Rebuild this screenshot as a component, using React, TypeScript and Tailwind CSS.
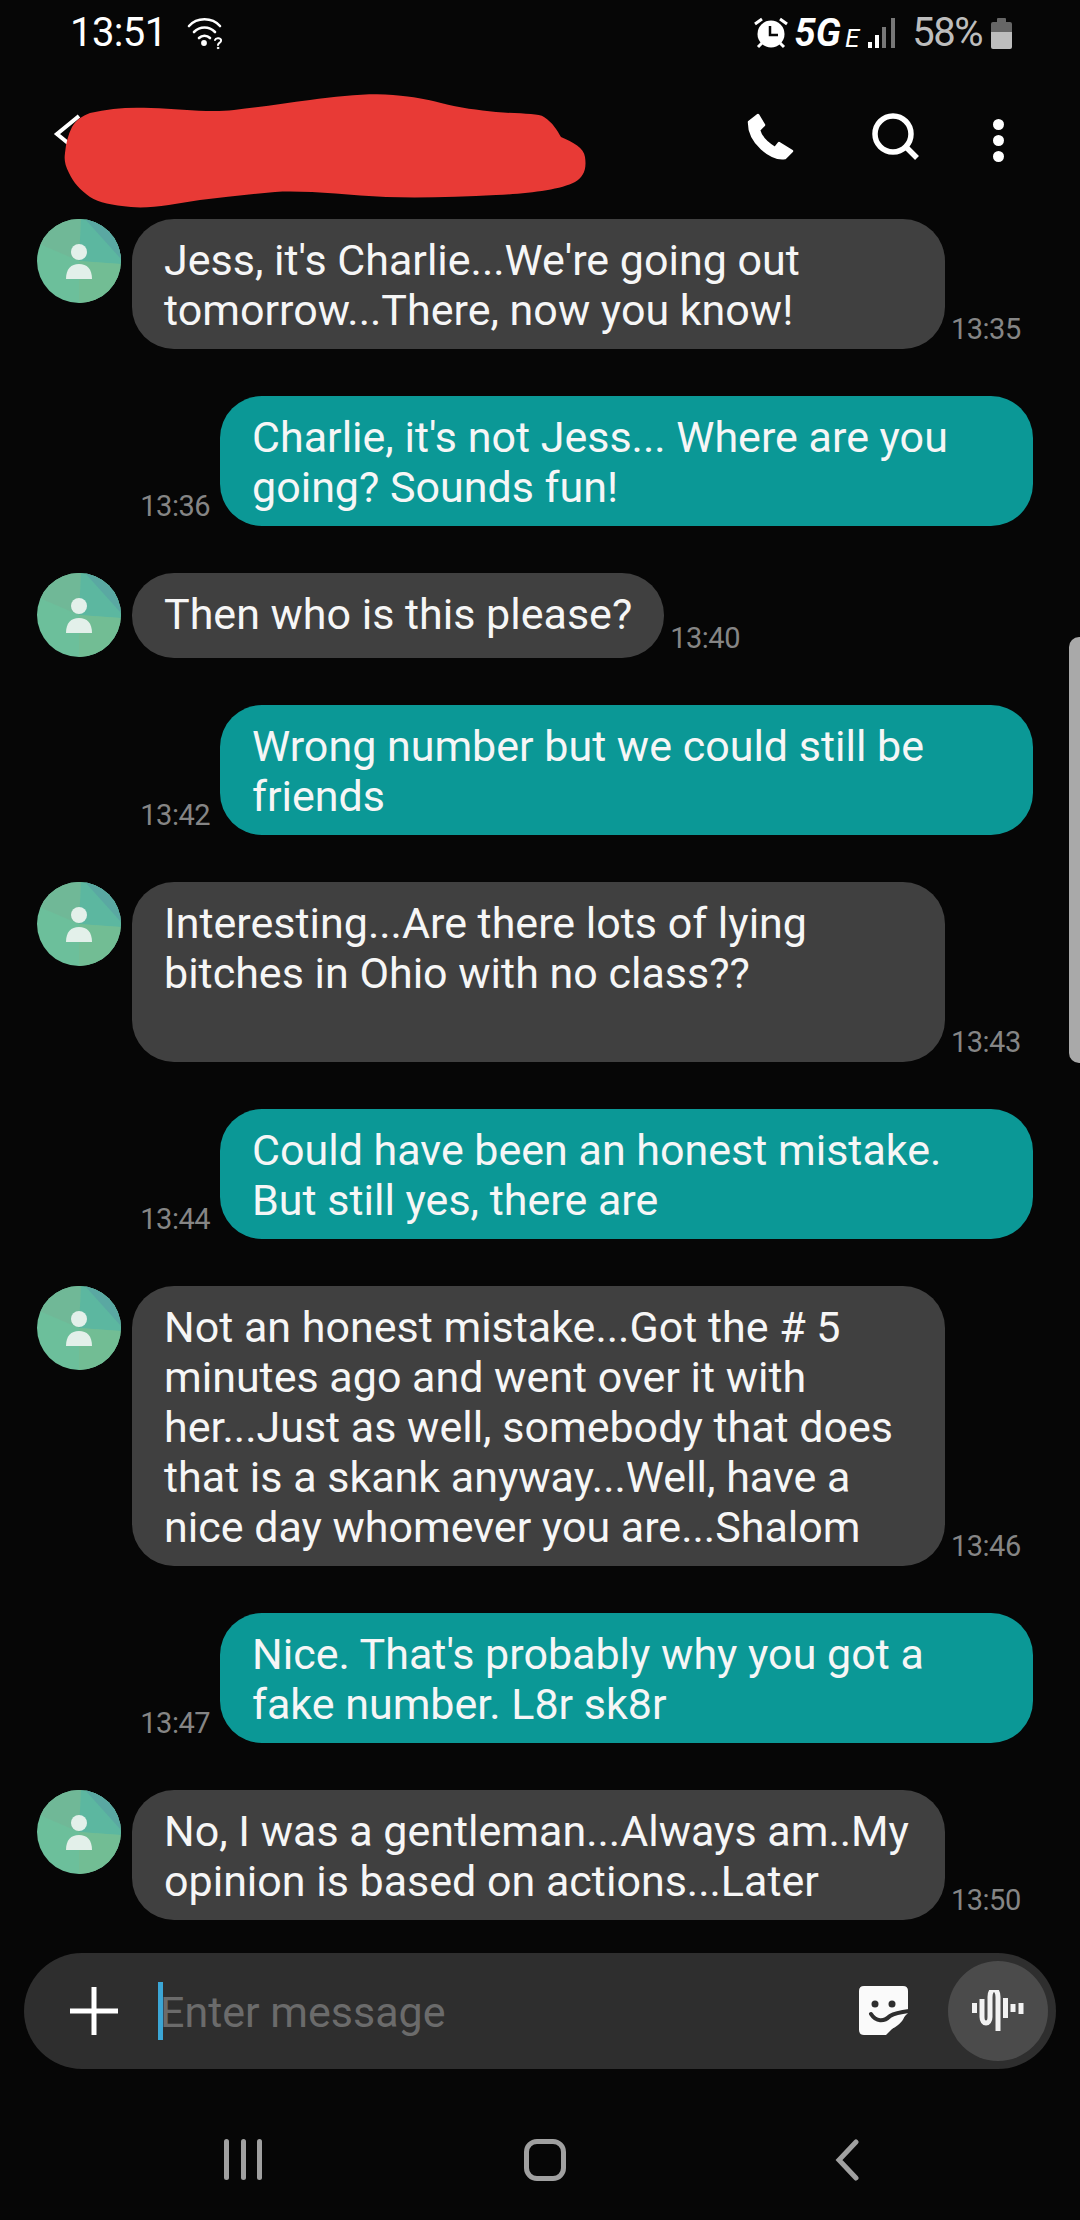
const messages = [
  { id: 1, from: 'them', time: '13:35', lines: ["Jess, it's Charlie...We're going out", 'tomorrow...There, now you know!'] },
  { id: 2, from: 'me', time: '13:36', lines: ["Charlie, it's not Jess... Where are you", 'going? Sounds fun!'] },
  { id: 3, from: 'them', time: '13:40', lines: ['Then who is this please?'], short: true },
  { id: 4, from: 'me', time: '13:42', lines: ['Wrong number but we could still be', 'friends'] },
  { id: 5, from: 'them', time: '13:43', lines: ['Interesting...Are there lots of lying', 'bitches in Ohio with no class??', '\u00a0'] },
  { id: 6, from: 'me', time: '13:44', lines: ['Could have been an honest mistake.', 'But still yes, there are'] },
  {
    id: 7,
    from: 'them',
    time: '13:46',
    lines: [
      'Not an honest mistake...Got the # 5',
      'minutes ago and went over it with',
      'her...Just as well, somebody that does',
      'that is a skank anyway...Well, have a',
      'nice day whomever you are...Shalom',
    ],
  },
  { id: 8, from: 'me', time: '13:47', lines: ["Nice. That's probably why you got a", 'fake number. L8r sk8r'] },
  { id: 9, from: 'them', time: '13:50', lines: ['No, I was a gentleman...Always am..My', 'opinion is based on actions...Later'] },
]

const Avatar = () => (
  <svg width="84" height="84" viewBox="0 0 84 84" className="shrink-0">
    <defs>
      <clipPath id="avatar-clip">
        <circle cx="42" cy="42" r="42" />
      </clipPath>
    </defs>
    <g clipPath="url(#avatar-clip)">
      <rect width="84" height="84" fill="#6cbf9b" />
      <path d="M42 42 L0 24 L0 0 L44 0 Z" fill="#70b897" />
      <path d="M42 42 L44 0 L84 0 L84 45 Z" fill="#5cb7a0" />
      <path d="M48 0 L84 0 L84 40 Z" fill="#5aa8a2" />
      <path d="M42 42 L84 45 L84 84 L42 84 Z" fill="#72bd94" />
    </g>
    <circle cx="42" cy="33" r="8" fill="#e3f0ea" />
    <path d="M29 60 C29 50 34 45 42 45 C50 45 55 50 55 60 Z" fill="#e3f0ea" />
  </svg>
)

const Bubble = ({ lines, mine, short }: { lines: string[]; mine: boolean; short?: boolean }) => (
  <div
    className={`${short ? 'pr-8' : 'w-[813px]'} ${mine ? 'bg-[#0b9896]' : 'bg-[#404040]'} rounded-[42px] pl-8 pt-[16px] pb-[14px] min-h-[85px] text-[43px] leading-[50px] text-[#f6f6f6]`}
  >
    {lines.map((line) => (
      <div key={line} className="whitespace-nowrap">
        {line}
      </div>
    ))}
  </div>
)

const Time = ({ children }: { children: string }) => (
  <span className="pb-[2px] text-[29px] leading-[36px] tracking-[-0.5px] text-[#858585]">{children}</span>
)

const StatusBar = () => (
  <div className="flex h-[64px] items-center justify-between pl-[70px] pr-[68px] pt-[2px] text-[40px]">
    <div className="flex items-center gap-[20px]">
      <span className="tracking-[-0.6px] text-white">13:51</span>
      <svg width="38" height="36" viewBox="0 0 38 34" fill="none" stroke="#fff" strokeWidth="2.6" strokeLinecap="round">
        <path d="M2 10 C10 1 25 1 33 10" />
        <path d="M7 16 C13 10 22 10 28 16" />
        <path d="M12 22 C15 19 20 19 23 22" />
        <circle cx="17" cy="27" r="1.6" fill="#fff" />
        <path d="M28 24 C29 21 35 22 34 25 C33.5 27 31 27 31 29" strokeWidth="2" />
        <circle cx="31" cy="32" r="0.8" fill="#fff" strokeWidth="1" />
      </svg>
    </div>
    <div className="flex items-center">
      <svg width="34" height="32" viewBox="0 0 34 32" fill="#fff" className="mr-[7px]">
        <circle cx="17" cy="17" r="13.5" />
        <path d="M16 9 V18 H24" fill="none" stroke="#060606" strokeWidth="2.5" />
        <path d="M1 7 L8 2 M33 7 L26 2 M4 30 L8 26 M30 30 L26 26" stroke="#fff" strokeWidth="3" />
      </svg>
      <span className="text-[38px] italic font-bold leading-none text-white">5G</span>
      <span className="ml-[4px] mt-[10px] text-[26px] italic leading-none text-white">E</span>
      <svg width="28" height="30" viewBox="0 0 28 30" className="ml-[9px] mr-[16px]">
        <rect x="0" y="24" width="4" height="6" fill="#fff" />
        <rect x="7" y="17" width="4" height="13" fill="#fff" />
        <rect x="14" y="9" width="4" height="21" fill="#777" />
        <rect x="23" y="0" width="4" height="30" fill="#777" />
      </svg>
      <span className="tracking-[-1.5px] text-[#bdbdbd]">58%</span>
      <div className="ml-[9px] flex flex-col items-center">
        <div className="h-[4px] w-[9px] rounded-t-[1px] bg-[#666]" />
        <div className="h-[10px] w-[21px] rounded-t-[2px] bg-[#666]" />
        <div className="h-[17px] w-[21px] rounded-b-[2px] bg-[#bdbdbd]" />
      </div>
    </div>
  </div>
)

const Header = () => (
  <div className="relative flex h-[155px] items-start pl-[53px] pr-[76px] pt-[49px]">
    <svg width="30" height="40" viewBox="0 0 30 40" fill="none" stroke="#fff" strokeWidth="4" className="mt-px">
      <path d="M26 2 L4 20 L26 38" />
    </svg>
    <svg width="540" height="120" viewBox="60 90 540 120" className="absolute left-[60px] top-[26px]">
      <path
        d="M90 113 C110 108 130 107 151 108 C180 109 210 113 234 110 C262 107 285 103 310 100 C340 96 370 93 393 95 C415 97 425 99 441 103 C460 108 478 110 496 112 C520 114 538 113 544 117 C553 123 557 130 561 137 C573 142 584 148 585 157 C587 170 583 177 575 182 C560 190 525 194 496 195 C460 197 420 198 386 197 C345 195 305 190 275 192 C250 194 225 197 200 200 C175 204 150 209 131 207 C112 205 99 203 90 197 C80 190 73 182 69 173 C65 165 64 160 65 153 C66 143 68 135 72 127 C76 120 82 116 90 113 Z"
        fill="#e83a36"
      />
    </svg>
    <div className="ml-auto flex items-start">
      <svg width="48" height="48" viewBox="0 0 48 48" fill="#fff" stroke="#fff" strokeWidth="2.5" strokeLinejoin="round">
        <path d="M3 9 L12 2 L18 12 L13 17 C15 24 22 31 29 35 L33 30 L46 38 L39 45 C25 47 3 30 3 9 Z" />
      </svg>
      <svg width="48" height="48" viewBox="0 0 48 48" fill="none" stroke="#fff" strokeWidth="5.5" className="ml-[78px]">
        <circle cx="21" cy="21" r="18" />
        <path d="M33 33 L45 45" />
      </svg>
      <div className="ml-[73px] mt-[6px] flex flex-col gap-[5px]">
        <div className="h-[11px] w-[11px] rounded-full bg-white" />
        <div className="h-[11px] w-[11px] rounded-full bg-white" />
        <div className="h-[11px] w-[11px] rounded-full bg-white" />
      </div>
    </div>
  </div>
)

const Composer = () => (
  <div className="mx-[24px] mt-[33px] flex h-[116px] items-center rounded-full bg-[#2e2e2e] pl-[46px] pr-[8px]">
    <svg width="48" height="48" viewBox="0 0 48 48" fill="#fff" className="shrink-0">
      <rect x="21.5" y="0" width="5" height="48" />
      <rect x="0" y="21.5" width="48" height="5" />
    </svg>
    <div className="ml-[40px] h-[58px] w-[5px] shrink-0 bg-[#3ba6d6]" />
    <span className="-ml-[3px] mt-[2px] text-[43px] text-[#6b6b6b]">Enter message</span>
    <svg width="50" height="50" viewBox="0 0 50 50" className="ml-auto shrink-0">
      <path d="M5 0 H44 Q49 0 49 5 V27 L27 49 H5 Q0 49 0 44 V5 Q0 0 5 0 Z" fill="#fafafa" />
      <circle cx="16" cy="18" r="3.5" fill="#2e2e2e" />
      <circle cx="33" cy="18" r="3.5" fill="#2e2e2e" />
      <path d="M12 28 C17 36 25 36 31 30 C36 27 42 26 50 25" fill="none" stroke="#2e2e2e" strokeWidth="4" strokeLinecap="round" />
      <path d="M30 44 C30 36 36 31 46 29 C44 36 38 41 30 44 Z" fill="#fafafa" />
    </svg>
    <div className="ml-[39px] flex h-[100px] w-[100px] shrink-0 items-center justify-center rounded-full bg-[#4b4b4b]">
      <svg width="52" height="42" viewBox="973 1993 52 42" fill="none" stroke="#f2f2f2" strokeWidth="5">
        <path d="M983 2002 V2020 C983 2028 991 2028 991 2020 V2000 C991 1990 999 1990 999 2000 V2034" />
        <path d="M975.5 2006 V2016 M1006.5 2001 V2021 M1014 2007 V2015 M1022 2006 V2017" />
      </svg>
    </div>
  </div>
)

const NavBar = () => (
  <div className="flex flex-1 items-start pt-[70px]">
    <div className="relative h-[42px] w-full">
      <div className="ml-[224px] flex w-[38px] justify-between">
        <div className="h-[41px] w-[5px] rounded-full bg-[#a0a0a0]" />
        <div className="h-[41px] w-[5px] rounded-full bg-[#a0a0a0]" />
        <div className="h-[41px] w-[5px] rounded-full bg-[#a0a0a0]" />
      </div>
      <div className="absolute left-[524px] top-0 h-[42px] w-[42px] rounded-[13px] border-[5px] border-[#a0a0a0]" />
      <svg width="24" height="42" viewBox="0 0 24 42" fill="none" stroke="#a0a0a0" strokeWidth="5" strokeLinecap="round" className="absolute left-[835px] top-0">
        <path d="M21 3 L4 21 L21 39" />
      </svg>
    </div>
  </div>
)

export default function App() {
  return (
    <div className="relative flex h-[2220px] w-[1080px] flex-col overflow-hidden bg-[#060606] font-['Roboto',sans-serif]">
      <StatusBar />
      <Header />
      <div className="flex flex-col gap-[47px]">
        {messages.map((m) =>
          m.from === 'them' ? (
            <div key={m.id} className="flex items-start pl-[37px]">
              <Avatar />
              <div className="ml-[11px] flex items-end gap-[6px]">
                <Bubble lines={m.lines} mine={false} short={m.short} />
                <Time>{m.time}</Time>
              </div>
            </div>
          ) : (
            <div key={m.id} className="flex items-end justify-end gap-[10px] pr-[47px]">
              <Time>{m.time}</Time>
              <Bubble lines={m.lines} mine />
            </div>
          ),
        )}
      </div>
      <Composer />
      <NavBar />
      {/* scroll indicator sits on top of the list */}
      <div className="absolute right-0 top-[637px] h-[426px] w-[11px] rounded-l-[10px] bg-[#a9a9a9]" />
    </div>
  )
}
